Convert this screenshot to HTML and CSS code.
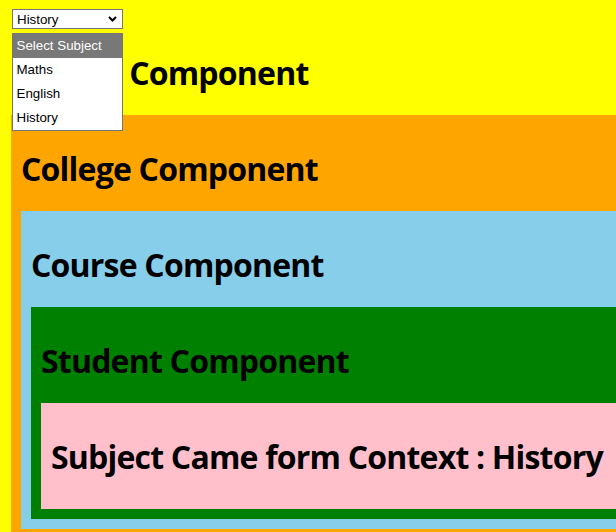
FILE: index.html
```html
<!DOCTYPE html>
<html lang="en">
<head>
<meta charset="utf-8">
<title>Context Demo</title>
<link rel="stylesheet" href="styles.css">
</head>
<body>
<div class="app">
  <div class="picker">
    <div class="select">
      <span class="select-value">History</span>
      <svg class="chevron" width="9" height="6" viewBox="0 0 9 6"><polyline points="1,1 4.5,4.5 8,1" fill="none" stroke="#000" stroke-width="2"/></svg>
    </div>
    <ul class="menu">
      <li class="option active">Select Subject</li>
      <li class="option">Maths</li>
      <li class="option">English</li>
      <li class="option">History</li>
    </ul>
  </div>
  <h1 class="title">Faculty Component</h1>
  <div class="box college">
    <h1 class="title">College Component</h1>
    <div class="box course">
      <h1 class="title">Course Component</h1>
      <div class="box student">
        <h1 class="title">Student Component</h1>
        <div class="box subject">
          <h1 class="title">Subject Came form Context : History</h1>
        </div>
      </div>
    </div>
  </div>
</div>
</body>
</html>
```
FILE: styles.css
```css
html, body {
  margin: 0;
  padding: 0;
  background: #ffff00;
  overflow: hidden;
}

.app {
  width: 680px;
  background: #ffff00;
  padding: 9px 0 0 11px;
  box-sizing: border-box;
  font-family: "Open Sans", "Noto Sans", sans-serif;
}

.picker {
  position: relative;
  margin-left: 1px;
  width: 111px;
}

.select {
  box-sizing: border-box;
  height: 20px;
  width: 111px;
  border: 1px solid #767676;
  background: #fff;
  display: flex;
  align-items: center;
  justify-content: space-between;
  padding: 0 5px 0 4px;
  font-family: "Liberation Sans", Arial, sans-serif;
  font-size: 13.33px;
  color: #000;
}

.chevron {
  display: block;
}

.menu {
  position: absolute;
  top: 24px;
  left: 0;
  width: 111px;
  box-sizing: border-box;
  margin: 0;
  padding: 0;
  list-style: none;
  background: #fff;
  border: 1px solid #767676;
  z-index: 2;
  font-family: "Liberation Sans", Arial, sans-serif;
  font-size: 13.33px;
  color: #000;
}

.option {
  height: 24px;
  line-height: 24px;
  padding-left: 3.5px;
  white-space: nowrap;
}

.option.active {
  background: #787878;
  color: #fff;
}

.title {
  margin: 21.5px 0;
  font-size: 32px;
  line-height: 43px;
  font-weight: 700;
  letter-spacing: -0.8px;
  color: #000;
  white-space: nowrap;
}

.box {
  padding: 10px;
}

.college { background: #ffa500; }
.course { background: #87ceeb; }
.student { background: #008000; }
.subject { background: #ffc0cb; }
```
